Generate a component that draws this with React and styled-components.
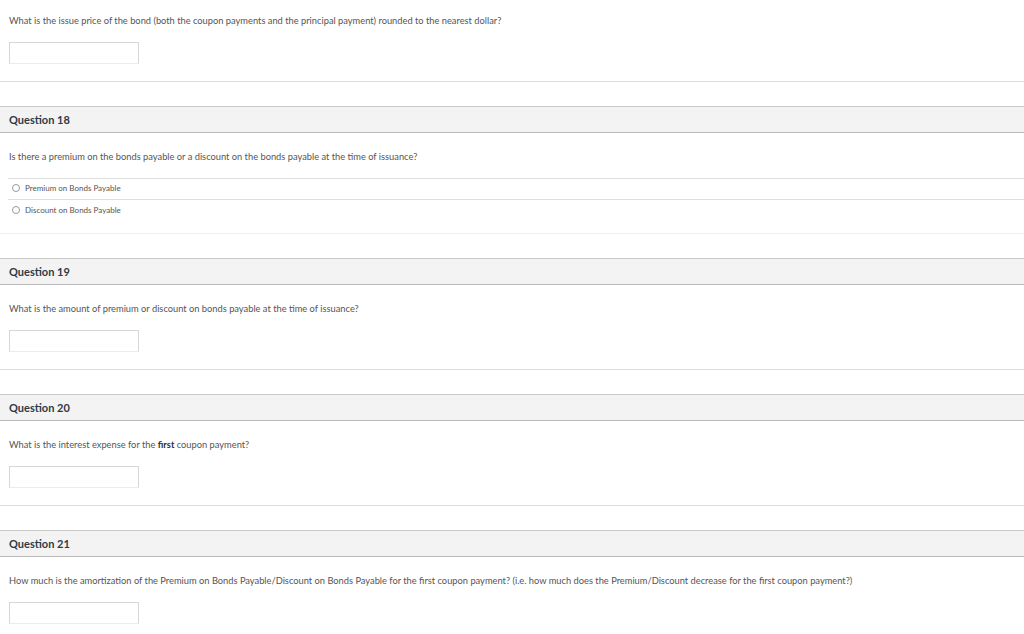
import React from 'react'
import styled, { createGlobalStyle } from 'styled-components'

const GlobalStyle = createGlobalStyle`
  html, body {
    margin: 0;
    padding: 0;
    background: #fff;
    font-family: Lato, "Open Sans", "Liberation Sans", sans-serif;
  }
`

const Page = styled.div`
  width: 1024px;
  height: 634px;
  overflow: hidden;
  display: flex;
  flex-direction: column;
`

const Block = styled.section`
  display: flex;
  flex-direction: column;
  margin-bottom: 24px;
`

const Header = styled.div`
  height: 25px;
  background: #f3f3f3;
  border-top: 1px solid #c9c9c9;
  border-bottom: 1px solid #bcbcbc;
  display: flex;
  align-items: center;
  padding: 0 9px 1px;
  box-sizing: border-box;
  height: 27px;
`

const HeaderTitle = styled.h3`
  margin: 0;
  font-size: 11px;
  font-weight: 700;
  color: #2d3b45;
`

const Body = styled.div`
  padding: ${p => p.$top || 18}px 0 ${p => p.$bottom ?? 17}px;
  border-bottom: 1px solid ${p => p.$faint ? '#eeeeee' : '#dcdcdc'};
  background: #fff;
`

const Prompt = styled.p`
  margin: 0 9px;
  font-size: 9.3px;
  line-height: 12px;
  color: #555;
  white-space: nowrap;

  strong {
    color: #2d2d2d;
  }
`

const AnswerInput = styled.div`
  margin: 15px 0 0 9px;
  width: 128px;
  height: 20px;
  border: 1px solid #d6d6d6;
  border-bottom-color: #ececec;
  background: #fff;
`

const Answers = styled.ul`
  list-style: none;
  margin: 15px 0 0 8px;
  padding: 0;
  border-top: 1px solid #dedede;
`

const Answer = styled.li`
  display: flex;
  align-items: center;
  gap: 5px;
  height: 21px;
  padding: 0 0 2px 4px;
  box-sizing: border-box;
  border-bottom: ${p => p.$last ? 'none' : '1px solid #dedede'};
  font-size: 8px;
  color: #555;
`

const Radio = styled.span`
  width: 6px;
  height: 6px;
  border-radius: 50%;
  border: 1px solid #999;
  background: #fff;
`

const TextQuestion = ({ number, children, top }) => (
  <Block>
    {number && (
      <Header>
        <HeaderTitle>Question {number}</HeaderTitle>
      </Header>
    )}
    <Body $top={top}>
      <Prompt>{children}</Prompt>
      <AnswerInput />
    </Body>
  </Block>
)

const ChoiceQuestion = ({ number, prompt, options }) => (
  <Block>
    <Header>
      <HeaderTitle>Question {number}</HeaderTitle>
    </Header>
    <Body $bottom={12} $faint>
      <Prompt>{prompt}</Prompt>
      <Answers>
        {options.map((o, i) => (
          <Answer key={o} $last={i === options.length - 1}>
            <Radio />
            {o}
          </Answer>
        ))}
      </Answers>
    </Body>
  </Block>
)

export default function App() {
  return (
    <Page>
      <GlobalStyle />
      <TextQuestion top={15}>
        What is the issue price of the bond (both the coupon payments and the principal payment) rounded to the nearest dollar?
      </TextQuestion>
      <ChoiceQuestion
        number={18}
        prompt="Is there a premium on the bonds payable or a discount on the bonds payable at the time of issuance?"
        options={['Premium on Bonds Payable', 'Discount on Bonds Payable']}
      />
      <TextQuestion number={19}>
        What is the amount of premium or discount on bonds payable at the time of issuance?
      </TextQuestion>
      <TextQuestion number={20}>
        What is the interest expense for the <strong>first</strong> coupon payment?
      </TextQuestion>
      <TextQuestion number={21}>
        How much is the amortization of the Premium on Bonds Payable/Discount on Bonds Payable for the first coupon payment? (i.e. how much does the Premium/Discount decrease for the first coupon payment?)
      </TextQuestion>
    </Page>
  )
}
